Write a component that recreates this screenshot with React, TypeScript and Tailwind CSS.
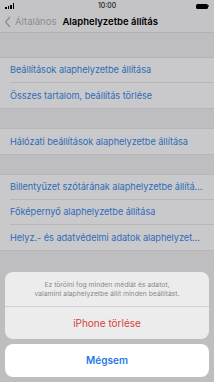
import React from 'react'

const font = { fontFamily: '"Inter", "Liberation Sans", Arial, sans-serif' }

const Row = ({ label, last }: { label: string; last?: boolean }) => (
  <div className="flex h-[25px] items-stretch pl-[10px]">
    <div className={`flex flex-1 items-center pr-[10px] min-w-0 ${last ? '' : 'border-b border-[#b6b6b9]'}`}>
      <span className="truncate text-[9.2px] text-[#2f6cb8] tracking-[-0.05px]">{label}</span>
    </div>
  </div>
)

const Group = ({ rows }: { rows: string[] }) => (
  <div className="bg-[#c9c9cb] border-y border-[#b6b6b9]">
    {rows.map((r, i) => (
      <Row key={r} label={r} last={i === rows.length - 1} />
    ))}
  </div>
)

export default function App() {
  return (
    <div className="relative w-[214px] h-[382px] overflow-hidden bg-[#bebec1]" style={font}>
      {/* status bar */}
      <div className="flex h-[12px] items-center justify-between px-[5px] bg-[#c4c4c6]">
        <div className="flex items-end gap-[1px] h-[6px] w-[20px]">
          <div className="w-[1.5px] h-[2px] bg-black" />
          <div className="w-[1.5px] h-[3px] bg-black" />
          <div className="w-[1.5px] h-[4.5px] bg-black" />
          <div className="w-[1.5px] h-[6px] bg-black" />
        </div>
        <span className="text-[7px] text-black">10:00</span>
        <div className="flex items-center w-[20px] justify-end">
          <div className="w-[12px] h-[5px] rounded-[1.5px] bg-black" />
          <div className="w-[1px] h-[2px] bg-black/60" />
        </div>
      </div>
      {/* nav bar */}
      <div className="flex h-[21px] items-center bg-[#c4c4c6] border-b border-[#b2b2b5] px-[4px]">
        <svg width="8" height="12" viewBox="0 0 8 12" className="mr-[3px]">
          <path d="M6 1 L1.5 6 L6 11" fill="none" stroke="#8e8e92" strokeWidth="1.3" />
        </svg>
        <span className="text-[9.5px] text-[#8c8c90]">Általános</span>
        <span className="ml-[6px] text-[9.5px] font-semibold text-black">Alaphelyzetbe állítás</span>
      </div>

      <div className="h-[24px]" />
      <Group rows={['Beállítások alaphelyzetbe állítása', 'Összes tartalom, beállítás törlése']} />
      <div className="h-[19px]" />
      <Group rows={['Hálózati beállítások alaphelyzetbe állítása']} />
      <div className="h-[19px]" />
      <Group
        rows={[
          'Billentyűzet szótárának alaphelyzetbe állítása',
          'Főképernyő alaphelyzetbe állítása',
          'Helyz.- és adatvédelmi adatok alaphelyzetbe állítása',
        ]}
      />

      {/* action sheet */}
      <div className="absolute left-[5px] right-[5px] top-[272px] flex flex-col gap-[5px]">
        <div className="rounded-[8px] bg-[#ececed] overflow-hidden">
          <div className="flex flex-col items-center justify-center h-[35px] border-b border-[#cfcfd2] text-[6.8px] leading-[9.5px] text-[#8a8a8e]">
            <span>Ez törölni fog minden médiát és adatot,</span>
            <span>valamint alaphelyzetbe állít minden beállítást.</span>
          </div>
          <div className="flex h-[32px] items-center justify-center text-[10px] text-[#d9413b]">iPhone törlése</div>
        </div>
        <div className="flex h-[33px] items-center justify-center rounded-[8px] bg-white text-[10px] font-semibold text-[#1f7ae6]">
          Mégsem
        </div>
      </div>
    </div>
  )
}
